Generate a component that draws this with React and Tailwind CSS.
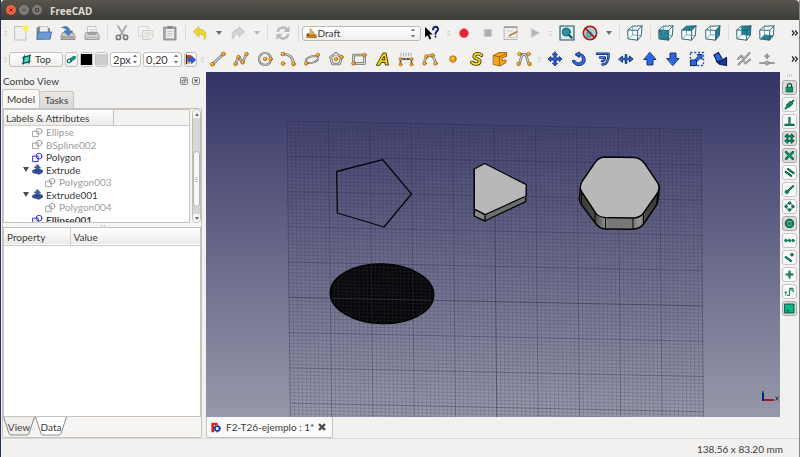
import clsx from 'clsx';

const Icon = ({ children, size = 'size-4' }) => (
    <svg viewBox="0 0 16 16" className={clsx(size, 'shrink-0')} fill="none" strokeLinecap="round" strokeLinejoin="round" aria-hidden="true">
        {children}
    </svg>
);

// Orange control points used by all draft tools
const Dots = ({ at, r = 1.8 }) =>
    at.map(([x, y]) => (
        <g key={`${x}-${y}`}>
            <circle cx={x} cy={y} r={r} fill="#f59a0c" stroke="#9a5a05" strokeWidth="0.6" />
            <circle cx={x - 0.4} cy={y - 0.5} r={r * 0.35} fill="#ffd98a" />
        </g>
    ));

// Grey tube with a dark outline
const Tube = ({ d }) => (
    <>
        <path d={d} stroke="#6a6c68" strokeWidth="2.6" />
        <path d={d} stroke="#d3d5d0" strokeWidth="1.2" />
    </>
);

const Cube = ({ fill }) => (
    <>
        <path d="M1 5 5.500 1H15V10.500L10.500 15H1Z" fill="#f6fbfb" />
        {fill && <path d={fill} fill="#218294" />}
        <path d="M1 5 5.300 1.200 15 .8 14.300 10.600 10.500 15.200 1.300 14ZM1 5 10.700 5.400 15 .8M10.700 5.400 10.500 15.200" stroke="#1c5c6b" strokeWidth="0.9" />
        <path d="M5.300 1.200 5.500 9.800 1.300 14M5.500 9.800 14.300 10.600" stroke="#4c8f9d" strokeWidth="0.7" />
    </>
);

const Blue = ({ d }) => <path d={d} fill="#2b67e0" stroke="#0d2b75" strokeWidth="0.9" />;

const icons = {
    newFile: (
        <>
            <path d="M2 1.5H13V15H2Z" fill="#eeefee" stroke="#b3b5b1" strokeWidth="0.8" />
            <circle cx="12.6" cy="2.8" r="3.2" fill="#f5f07a" />
            <circle cx="12.6" cy="2.8" r="1.6" fill="#fff43a" />
        </>
    ),
    open: (
        <>
            <path d="M1 14V3L2.5 2H6L7 3.5H13.5V13Z" fill="#8b8b88" stroke="#6b6b68" strokeWidth="0.7" />
            <path d="M4 1.5H12V8H4Z" fill="#ededeb" stroke="#a5a5a3" strokeWidth="0.5" />
            <path d="M2.7 7H15.5L14.2 14.2H1.2Z" fill="#6c9bd2" stroke="#416da5" strokeWidth="0.8" />
        </>
    ),
    save: (
        <>
            <path d="M3 7.5H13L15 11V14.5H1V11Z" fill="#c9cac8" stroke="#7c7d7a" strokeWidth="0.8" />
            <path d="M2 11.2H14V13.6H2Z" fill="#a1a29f" />
            <path d="M2 2.5C6 0.5 9.5 2 9.7 6H12.5L8.3 10.7 4 6H6.5C6.5 3.8 5 2.8 2 2.5Z" fill="#4d83be" stroke="#28578f" strokeWidth="0.6" />
        </>
    ),
    print: (
        <>
            <path d="M4 1.5H12V9H4Z" fill="#f7f7f6" stroke="#aaaba8" strokeWidth="0.7" />
            <path d="M6 4.5H10M6 6.3H10" stroke="#bcbcba" strokeWidth="0.8" />
            <path d="M2.5 7.5H13.5L15 10V14.5H1V10Z" fill="#d4d5d2" stroke="#8b8c89" strokeWidth="0.8" />
            <path d="M4 9H12" stroke="#747572" strokeWidth="1.2" />
            <path d="M2 12.5H14" stroke="#a8a9a6" strokeWidth="0.8" />
        </>
    ),
    cut: (
        <>
            <path d="M4 1 9.8 10.6M12 1 6.2 10.6" stroke="#a6a7a4" strokeWidth="1.7" />
            <circle cx="4.4" cy="12.4" r="2.1" stroke="#757674" strokeWidth="1.5" />
            <circle cx="11.6" cy="12.4" r="2.1" stroke="#757674" strokeWidth="1.5" />
        </>
    ),
    copy: (
        <>
            <path d="M1 1.5H10.5V11H1Z" fill="#f2f2f0" stroke="#d0d0ce" strokeWidth="0.8" />
            <path d="M5 5.5H15V12L12.5 14.5H5Z" fill="#eeeeec" stroke="#c4c4c2" strokeWidth="0.8" />
            <path d="M7 8H13M7 10H13M7 12H11" stroke="#d0d0ce" strokeWidth="0.8" />
        </>
    ),
    paste: (
        <>
            <path d="M2 2H14V15H2Z" fill="#a9aaa7" stroke="#848582" strokeWidth="0.8" />
            <path d="M4 4H12V13.3H4Z" fill="#eeeeec" />
            <path d="M5.5 1H10.5V3.8H5.5Z" fill="#8a8b88" />
            <path d="M5.5 6.5H10.5M5.5 8.5H10.5M5.5 10.5H9" stroke="#bdbdbb" strokeWidth="0.8" />
        </>
    ),
    undo: <path d="M1.5 6.5 7 1.5V4.3C12.5 4.2 16 8.5 12.5 14.5 12.5 10.5 10.5 9 7 9V11.7Z" fill="#f0d52e" stroke="#d0b31a" strokeWidth="0.7" />,
    redo: <path d="M14.5 6.5 9 1.5V4.3C3.5 4.2 0 8.5 3.5 14.5 3.5 10.5 5.5 9 9 9V11.7Z" fill="#d2d3d1" stroke="#bbbcba" strokeWidth="0.7" />,
    refresh: (
        <>
            <path d="M2.8 7C3.2 1.8 10 1.5 12 4.5M13.2 9C12.8 14.2 6 14.5 4 11.5" stroke="#b8b9b7" strokeWidth="2.4" strokeLinecap="butt" />
            <path d="M14.5 1V7H8.5ZM1.5 15V9H7.5Z" fill="#b8b9b7" />
        </>
    ),
    help: (
        <>
            <path d="M1 2V12.5L3.5 10.3 5.5 14.5 7.3 13.6 5.4 9.6H8.8Z" fill="#000" />
            <path d="M9 4.5C9 .8 14.5 1 14 4.5 13.7 6.3 11.5 6.5 11.5 9M11.5 11.4V11.8" stroke="#121a72" strokeWidth="1.9" />
        </>
    ),
    record: <circle cx="8" cy="8.2" r="4.6" fill="#e8242f" stroke="#f08a8d" strokeWidth="0.7" />,
    stop: <path d="M4.5 4.5H11.5V11.5H4.5Z" fill="#adaeac" stroke="#c9cac8" />,
    macro: (
        <>
            <path d="M1.5 2H14V14.5H1.5Z" fill="#efefed" stroke="#a8a9a6" strokeWidth="0.8" />
            <path d="M1.5 2.2H14" stroke="#8b8c89" strokeWidth="1.2" />
            <path d="M4 6H10M4 12.5H12" stroke="#c3c3c1" strokeWidth="0.8" />
            <path d="M6.5 10.5 14 6.8" stroke="#b4823d" strokeWidth="1.7" />
        </>
    ),
    play: <path d="M4.5 3.8 12.5 8 4.5 12.2Z" fill="#b4b5b3" stroke="#c8c9c7" strokeWidth="0.6" />,
    fit: (
        <>
            <path d="M1 1H15V15H1Z" fill="#d8eef0" stroke="#1b5866" strokeWidth="1.1" />
            <path d="M9.7 9.7 12.7 12.7" stroke="#14505d" strokeWidth="2.2" />
            <circle cx="7.3" cy="7" r="4" fill="#2c94a3" stroke="#14505d" strokeWidth="0.9" />
        </>
    ),
    drawStyle: (
        <>
            <circle cx="8" cy="8" r="5.2" fill="#8fd5df" />
            <path d="M5 7H9V12H5Z" fill="#5bb6c3" stroke="#2f7d88" strokeWidth="0.6" />
            <circle cx="8" cy="8" r="6.6" stroke="#a91717" strokeWidth="1.7" />
            <path d="M3.4 3.4 12.6 12.6" stroke="#a91717" strokeWidth="1.7" />
        </>
    ),
    iso: <Cube />,
    front: <Cube fill="M1 5 10.700 5.400 10.500 15.200 1.300 14Z" />,
    top: <Cube fill="M1 5 5.300 1.200 15 .8 10.700 5.400Z" />,
    right: <Cube fill="M10.700 5.400 15 .8 14.300 10.600 10.500 15.200Z" />,
    rear: <Cube fill="M5.300 1.200 15 .8 14.300 10.600 5.500 9.800Z" />,
    bottom: <Cube fill="M1.300 14 5.500 9.800 14.300 10.600 10.500 15.200Z" />,
    line: (
        <>
            <Tube d="M2.5 13.2 13.3 3" />
            <Dots at={[[2.5, 13.2], [13.3, 3]]} r={2} />
        </>
    ),
    wire: (
        <>
            <Tube d="M2.5 13 5.5 6 9.5 11.5 13.5 3" />
            <Dots at={[[2.5, 13], [5.5, 6], [9.7, 11.5], [13.5, 3]]} />
        </>
    ),
    circle: (
        <>
            <circle cx="8" cy="8" r="6" stroke="#6a6c68" strokeWidth="2.2" />
            <circle cx="8" cy="8" r="6" stroke="#d3d5d0" strokeWidth="1" />
            <Dots at={[[8, 8], [13.7, 8]]} />
        </>
    ),
    arc: (
        <>
            <Tube d="M3 3C8.5 2.5 13.5 7 13.5 13" />
            <Dots at={[[3, 3], [3, 12.5], [13.5, 13]]} r={1.9} />
        </>
    ),
    ellipse: (
        <>
            <ellipse cx="7.8" cy="8.5" rx="6.4" ry="3.2" stroke="#6a6c68" strokeWidth="2" transform="rotate(-14 8 8)" />
            <ellipse cx="7.8" cy="8.5" rx="6.4" ry="3.2" stroke="#d3d5d0" strokeWidth="0.8" transform="rotate(-14 8 8)" />
            <Dots at={[[2.2, 12.5], [13.8, 4]]} />
        </>
    ),
    polygon: (
        <>
            <Tube d="M8 2.2 13.5 6.2 11.5 13H4.5L2.5 6.2Z" />
            <Dots at={[[8, 8], [13.5, 6]]} />
        </>
    ),
    rectangle: (
        <>
            <Tube d="M2.5 4H13.5V12.5H2.5Z" />
            <Dots at={[[2.5, 12.5], [13.5, 4]]} />
        </>
    ),
    text: <path d="M1.5 14 8 2H11L13.5 14H10.3L10 11.5H6.2L5 14ZM7.5 9H9.8L9.3 5.5Z" fill="#f2d416" stroke="#393500" strokeWidth="0.9" />,
    dimension: (
        <>
            <path d="M2.5 13V8H13.5V13" stroke="#565855" strokeWidth="1.6" />
            <path d="M4.500 8 7 6.500V9.500ZM11.500 8 9 6.500V9.500Z" fill="#565855" />
            <path d="M3 2V5M5.500 2V5M8 2V5M10.500 2V5M13 2V5" stroke="#a6a7a4" strokeWidth="0.9" />
            <Dots at={[[2.5, 8], [2.5, 13.5], [13.5, 8], [13.5, 13.5]]} r={1.5} />
        </>
    ),
    bspline: (
        <>
            <Tube d="M2.5 12.5C3 2 12.5 2 13.5 12.5" />
            <Dots at={[[2.5, 12.5], [4.3, 5.5], [10.5, 4.3], [13.5, 12.5]]} />
        </>
    ),
    point: <Dots at={[[8, 8]]} r={3.3} />,
    shapeString: (
        <>
            <path d="M12.5 4.3C9.5 1.5 4.5 3 5.3 6 6 8.2 11 7.8 10.7 10.5 10.3 13.7 5 13.8 2.8 11.3" stroke="#393500" strokeWidth="3.6" />
            <path d="M12.5 4.3C9.5 1.5 4.5 3 5.3 6 6 8.2 11 7.8 10.7 10.5 10.3 13.7 5 13.8 2.8 11.3" stroke="#f2d416" strokeWidth="2" />
        </>
    ),
    facebinder: (
        <>
            <path d="M1.5 4.500 7 1.500 14.5 1.5V5.5L10 7V9.5L14 9V11.5L8 15 1.5 13.500Z" fill="#f6a417" stroke="#8b5608" strokeWidth="0.8" />
            <path d="M7.5 6 14.5 2.5M7.5 6V14.500M1.5 4.500 7.5 6" stroke="#8b5608" strokeWidth="0.8" />
        </>
    ),
    bezier: (
        <>
            <path d="M4 3H12" stroke="#6a6c68" strokeWidth="1" />
            <Tube d="M2.5 13C5.500 11 4 3.500 8 3.500S10.500 11 13.5 13" />
            <Dots at={[[2.5, 13], [3.500, 3], [12.500, 3], [13.5, 13]]} />
        </>
    ),
    move: <Blue d="M8 1 10.5 3.8H9V7H12.2V5.5L15 8 12.2 10.5V9H9V12.2H10.5L8 15 5.5 12.2H7V9H3.8V10.5L1 8 3.8 5.5V7H7V3.8H5.5Z" />,
    rotate: <Blue d="M8.300 4.500V6.500L4 3.500 8.300 .8V2.500C16 3 16.500 14.500 8 14.600 4.500 14.600 2 12.500 1.300 9.800L3.800 9.200C5 12 8 12.300 9.800 11 12.500 9 11.500 4.700 8.300 4.500Z" />,
    offset: (
        <>
            <path d="M2 2.8H13.5C14 8.5 12 13.3 7.5 13.5M5 6.5H9.8C10 8.5 9 10 7 10.2" stroke="#0d2b75" strokeWidth="2.5" />
            <path d="M2 2.8H13.5C14 8.5 12 13.3 7.5 13.5M5 6.5H9.8C10 8.5 9 10 7 10.2" stroke="#3f78e6" strokeWidth="1.1" />
        </>
    ),
    trimex: <Blue d="M.8 8 4.500 5V7.200H7.200V3.500H8.800V7.200H11.500V5L15.200 8 11.500 11V8.800H8.800V12.500H7.200V8.800H4.500V11Z" />,
    upgrade: <Blue d="M8 1.5 14 8.5H11V14H5V8.5H2Z" />,
    downgrade: <Blue d="M8 14.5 14 7.5H11V2H5V7.5H2Z" />,
    scale: (
        <>
            <path d="M1.5 1.5H14.5V14.5H1.5Z" stroke="#1c4fd0" strokeWidth="1.3" strokeDasharray="2 1.8" strokeLinecap="butt" />
            <path d="M2 9H7.5V14.5H2Z" fill="#2b67e0" stroke="#0d2b75" />
            <Blue d="M6.5 8 9.5 5 8 3.5H13V8.5L11.5 7 8.5 10Z" />
        </>
    ),
    drawing: (
        <>
            <path d="M2 4 6.500 1.500 11 9.500 5 10.500Z" fill="#2b67e0" stroke="#0b1f5c" strokeWidth="1.2" />
            <path d="M4.500 10.500H9L14.500 6.500V14.500L8 13.500Z" fill="#15379c" stroke="#0b1f5c" strokeWidth="1.2" />
        </>
    ),
    wireToBspline: (
        <>
            <path d="M2 8 5.500 4.500 8 8 13.500 2M2.500 13.500 7 9 9.500 12.500 14 8.500" stroke="#858683" strokeWidth="2" />
            <path d="M2 8 5.500 4.500 8 8 13.500 2M2.500 13.500 7 9 9.500 12.500 14 8.500" stroke="#c6c7c5" strokeWidth="0.7" />
        </>
    ),
    addPoint: (
        <>
            <path d="M1 12H15" stroke="#9c9d9a" strokeWidth="2" />
            <circle cx="8" cy="12" r="2.2" fill="#a9aaa7" stroke="#858683" strokeWidth="0.6" />
            <path d="M8 2.5V8M5.3 5.2H10.7" stroke="#959693" strokeWidth="1.9" strokeLinecap="butt" />
        </>
    ),
    plane: (
        <>
            <path d="M4 4 13 2.5 12 12 3 13.5Z" fill="#5fd0bd" stroke="#0b5a55" strokeWidth="1.6" />
            <path d="M1.500 6 14.5 1.500M1.5 14 14 10.500M5 1.5 3.5 15M12.5 1 11.5 14.5" stroke="#0b5a55" strokeWidth="1.2" />
        </>
    ),
    construction: (
        <>
            <path d="M2 11C1 7 7 6 8.5 8.5 9 12 3 14 2 11Z" stroke="#0c7668" strokeWidth="1.8" />
            <path d="M6.5 9C6 5 12 2 14 4 14.5 8 9 10 6.5 9Z" fill="#12a08a" stroke="#0b5a50" />
        </>
    ),
    apply: (
        <>
            <path d="M2 1V14" stroke="#1f1f1f" strokeWidth="1.600" />
            <path d="M3 1.500H9V6H3Z" fill="#d83a2a" />
            <path d="M4 6H9.500V3L15.500 8.5 9.500 14V11H4Z" fill="#2b5bd0" stroke="#0d2b75" strokeWidth="0.8" />
            <path d="M3 11.500H7.500V14.500H3Z" fill="#e8b21c" />
        </>
    ),
    draft: (
        <>
            <path d="M6.5 1 13.5 10.5 6.5 11Z" fill="#f0b41a" stroke="#8b5608" strokeWidth="0.7" />
            <path d="M1 8 5 7.5V13H1Z" fill="#8a4a16" />
            <path d="M2 10.5 15 10V14H2Z" fill="#c9821d" stroke="#71430c" strokeWidth="0.7" />
        </>
    ),
    sketch: (
        <>
            <path d="M1.5 6H9V14H1.5Z" stroke="currentColor" strokeWidth="1.4" />
            <circle cx="10.3" cy="6" r="4.2" stroke="currentColor" strokeWidth="1.4" />
        </>
    ),
    extrude: (
        <>
            <path d="M1 9.5 5 7.5H12L15.5 9.5V12L10 15 1 12.5Z" fill="#2f4f9e" stroke="#16295f" strokeWidth="0.8" />
            <path d="M8 .8 12.3 5.3H10V9.5H6V5.3H3.7Z" fill="#3a66c4" stroke="#16295f" strokeWidth="0.8" />
        </>
    ),
    freecad: (
        <>
            <path d="M2 1H11V4.5H6V7H9V10H6V15H2Z" fill="#d9261c" />
            <circle cx="10.5" cy="9.5" r="3.5" stroke="#17409a" strokeWidth="2.6" fill="#fff" />
            <circle cx="10.5" cy="9.5" r="5" stroke="#17409a" strokeWidth="1.4" strokeDasharray="1.8 2.1" strokeLinecap="butt" />
        </>
    ),
};

const G = '#08966f';
const D = '#044f3d';
const Snap = ({ d, w = 2.2 }) => (
    <>
        <path d={d} stroke={D} strokeWidth={w + 1.5} />
        <path d={d} stroke={G} strokeWidth={w} />
    </>
);
const SnapDots = ({ at, r = 1.6 }) => at.map(([x, y]) => <circle key={`${x}-${y}`} cx={x} cy={y} r={r} fill={G} stroke={D} strokeWidth="0.9" />);

const snaps = [
    {
        label: 'Toggle snap',
        on: true,
        icon: (
            <>
                <path d="M5 8V5C5 1.5 11 1.5 11 5V8" stroke={D} strokeWidth="1.8" />
                <path d="M3.5 7.5H12.5V14.5H3.5Z" fill={G} stroke={D} strokeWidth="1.1" />
            </>
        ),
    },
    { label: 'Midpoint', icon: <><Snap d="M2 14 14 2" w={1} /><SnapDots at={[[6.500, 9.500], [9.500, 6.500]]} r={3} /></> },
    { label: 'Perpendicular', icon: <Snap d="M8 2.5V13M2 13H14" w={1.6} /> },
    { label: 'Grid', on: true, icon: <><Snap d="M5 2V14M11 2V14M2 5H14M2 11H14" w={1} /><SnapDots at={[[4.5, 4.5], [11.5, 4.5], [4.5, 11.5], [11.5, 11.5]]} r={2.2} /></> },
    { label: 'Intersection', on: true, icon: <Snap d="M3 3 13 13M13 3 3 13" w={2} /> },
    { label: 'Parallel', icon: <Snap d="M2.5 7 10.5 13M6 3 14 9" w={1.5} /> },
    { label: 'Endpoint', icon: <><Snap d="M4 11.5 13.5 3" w={1.4} /><SnapDots at={[[4, 11.5]]} r={2.6} /></> },
    { label: 'Angle', icon: <><circle cx="8" cy="8" r="4.7" stroke={D} strokeWidth="1" /><SnapDots at={[[8, 3], [13, 8], [8, 13], [3, 8]]} r={2} /></> },
    { label: 'Center', on: true, icon: <><circle cx="8" cy="8" r="5.2" stroke={D} strokeWidth="3.4" /><circle cx="8" cy="8" r="5.2" stroke={G} strokeWidth="1.6" /><SnapDots at={[[8, 8]]} r={2.1} /></> },
    { label: 'Extension', icon: <SnapDots at={[[2.8, 8], [8, 8], [13.2, 8]]} r={1.9} /> },
    { label: 'Near', icon: <><Snap d="M2.5 7.5 10 13" w={1.8} /><SnapDots at={[[11.5, 4]]} r={2.1} /></> },
    { label: 'Ortho', icon: <Snap d="M8 3.5V12.5M3.5 8H12.5" w={1.5} /> },
    {
        label: 'Dimensions',
        icon: <path d="M8 12V5.5H13.5V9M8 13.5H5M2.5 8V13M1.5 9.5H4M8 3.5H13" stroke="#2b8a74" strokeWidth="1.8" strokeDasharray="3 1" />,
    },
    {
        label: 'Working plane',
        on: true,
        icon: (
            <>
                <path d="M1.5 1.5H14.5V14.5H1.5Z" fill="#0bb987" stroke={D} strokeWidth="1.4" />
                <circle cx="5.5" cy="11" r="1.5" stroke={D} strokeWidth="0.9" />
            </>
        ),
    },
];

const tree = [
    { name: 'Ellipse', icon: 'sketch', hidden: true },
    { name: 'BSpline002', icon: 'sketch', hidden: true },
    { name: 'Polygon', icon: 'sketch' },
    { name: 'Extrude', icon: 'extrude', open: true },
    { name: 'Polygon003', icon: 'sketch', hidden: true, child: true },
    { name: 'Extrude001', icon: 'extrude', open: true },
    { name: 'Polygon004', icon: 'sketch', hidden: true, child: true },
    { name: 'Ellipse001', icon: 'sketch', bold: true },
];

const Tool = ({ name }) => (
    <button type="button" aria-label={name} className="flex h-5 min-w-0 flex-1 items-center justify-center">
        <Icon>{icons[name]}</Icon>
    </button>
);

const Sep = () => <div className="mx-[3px] h-4 w-px shrink-0 bg-[#dddbd9]" />;

const Handle = () => (
    <div className="flex w-2 shrink-0 flex-col items-center gap-px">
        {[0, 1, 2].map((i) => (
            <span key={i} className="h-px w-[3px] bg-[#d6d4d2]" />
        ))}
    </div>
);

const Arrow = ({ off }) => (
    <button type="button" aria-label="More" className="flex w-3.5 shrink-0 items-center justify-center">
        <svg viewBox="0 0 6 4" className="h-1 w-1.5">
            <path d="M0 0H6L3 4Z" fill={off ? '#b9b8b6' : '#6d6c6a'} />
        </svg>
    </button>
);

const More = () => (
    <button type="button" aria-label="More tools" className="flex w-5 shrink-0 items-center justify-end">
        <svg viewBox="0 0 8 6" className="h-1.5 w-2" fill="none" stroke="#222" strokeWidth="1.2">
            <path d="M1 .5 3.2 3 1 5.5M4.2 .5 6.4 3 4.2 5.5" />
        </svg>
    </button>
);

const Stepper = () => (
    <svg viewBox="0 0 6 10" className="h-2.5 w-1.5 shrink-0" fill="#6d6c6a" aria-hidden="true">
        <path d="M1 3 3 .5 5 3ZM1 7 3 9.5 5 7Z" />
    </svg>
);

const Spin = ({ label, value, className }) => (
    <label className={clsx('flex h-[15px] shrink-0 items-center rounded-[3px] border border-[#c2bfbc] bg-white pr-0.5', className)}>
        <input aria-label={label} defaultValue={value} className="h-full w-full min-w-0 bg-transparent pl-0.5 text-[11px] leading-3 outline-none" />
        <Stepper />
    </label>
);

const box = 'flex shrink-0 items-center justify-center rounded-[3px] border border-[#c2bfbc] bg-gradient-to-b from-white to-[#f0efed]';

function TitleBar() {
    return (
        <header className="flex h-5 items-center gap-[3px] rounded-t bg-gradient-to-b from-[#57554e] to-[#3d3c38] pl-[5px] text-[#dfdbd2]">
            <button type="button" aria-label="Close" className="flex size-[10px] items-center justify-center rounded-full bg-[#ee6238]">
                <svg viewBox="0 0 6 6" className="size-1.5" stroke="#5d2411"><path d="M1.5 1.5 4.5 4.5M4.5 1.5 1.5 4.5" /></svg>
            </button>
            <button type="button" aria-label="Minimize" className="flex size-[10px] items-center justify-center rounded-full bg-[#7d7b73]">
                <svg viewBox="0 0 6 6" className="size-1.5" stroke="#3c3b37"><path d="M1 3H5" /></svg>
            </button>
            <button type="button" aria-label="Maximize" className="flex size-[10px] items-center justify-center rounded-full bg-[#7d7b73]">
                <svg viewBox="0 0 6 6" className="size-1.5" fill="none" stroke="#3c3b37"><path d="M1.5 1.5H4.5V4.5H1.5Z" /></svg>
            </button>
            <h1 className="pt-px pl-[5px] font-['Noto_Sans',sans-serif] text-[10px] font-bold">FreeCAD</h1>
        </header>
    );
}

function Toolbars() {
    return (
        <>
            <div className="flex h-[26px] items-center">
                <Handle />
                {['newFile', 'open', 'save', 'print'].map((n) => <Tool key={n} name={n} />)}
                <Sep />
                {['cut', 'copy', 'paste'].map((n) => <Tool key={n} name={n} />)}
                <Sep />
                <Tool name="undo" />
                <Arrow />
                <Tool name="redo" />
                <Arrow off />
                <Sep />
                <Tool name="refresh" />
                <Sep />
                <label className="relative flex h-[15px] w-[119px] shrink-0 items-center rounded-[3px] border border-[#bcb9b6] bg-gradient-to-b from-white to-[#f0efed] pr-1">
                    <span className="pointer-events-none absolute left-[3px]"><Icon size="size-[11px]">{icons.draft}</Icon></span>
                    <select aria-label="Workbench" className="h-full w-full appearance-none bg-transparent pl-[15px] text-[10px] leading-3 outline-none">
                        <option>Draft</option>
                    </select>
                    <Stepper />
                </label>
                <Tool name="help" />
                <Handle />
                {['record', 'stop', 'macro', 'play'].map((n) => <Tool key={n} name={n} />)}
                <Handle />
                <Tool name="fit" />
                <Tool name="drawStyle" />
                <Arrow />
                <Sep />
                <Tool name="iso" />
                <Sep />
                {['front', 'top', 'right'].map((n) => <Tool key={n} name={n} />)}
                <Sep />
                {['rear', 'bottom'].map((n) => <Tool key={n} name={n} />)}
                <More />
            </div>
            <div className="flex h-[26px] items-center">
                <Handle />
                <div className="flex w-[189px] shrink-0 items-center gap-0.5">
                    <button type="button" className={clsx(box, 'h-[15px] w-[54px] gap-[3px]')}>
                        <Icon size="size-[11px]">{icons.plane}</Icon>
                        Top
                    </button>
                    <button type="button" aria-label="Construction mode" className={clsx(box, 'h-[15px] w-[13px]')}><Icon size="size-[11px]">{icons.construction}</Icon></button>
                    <button type="button" aria-label="Line colour" className={clsx(box, 'h-[15px] w-[13px]')}><span className="size-[11px] bg-black" /></button>
                    <button type="button" aria-label="Face colour" className={clsx(box, 'h-[15px] w-[13px]')}><span className="size-[11px] bg-[#cccccc]" /></button>
                    <Spin label="Line width" value="2px" className="w-[31px]" />
                    <Spin label="Text size" value="0,20" className="w-[39px]" />
                    <button type="button" aria-label="Apply style" className={clsx(box, 'h-[15px] w-[13px]')}><Icon size="size-[11px]">{icons.apply}</Icon></button>
                </div>
                <Handle />
                {['line', 'wire', 'circle', 'arc', 'ellipse', 'polygon', 'rectangle', 'text', 'dimension', 'bspline', 'point', 'shapeString', 'facebinder', 'bezier'].map((n) => <Tool key={n} name={n} />)}
                <Handle />
                {['move', 'rotate', 'offset', 'trimex', 'upgrade', 'downgrade', 'scale', 'drawing', 'wireToBspline', 'addPoint'].map((n) => <Tool key={n} name={n} />)}
                <More />
            </div>
        </>
    );
}

function TreeItem({ item }) {
    return (
        <li className={clsx('flex items-center', item.child ? 'pl-8' : 'pl-[19px]', item.hidden && 'text-[#a09e9c]', item.bold && 'font-bold')}>
            <span className="flex w-[9px] shrink-0">
                {item.open && <svg viewBox="0 0 6 5" className="h-[5px] w-1.5"><path d="M0 0H6L3 5Z" fill="#4b4a48" /></svg>}
            </span>
            <span className={clsx('flex w-[14px] shrink-0', item.icon === 'sketch' && !item.hidden && 'text-[#2a2af0]')}>
                <Icon size="size-[11px]">{icons[item.icon]}</Icon>
            </span>
            {item.name}
        </li>
    );
}

function ComboView() {
    return (
        <aside className="flex w-[201px] shrink-0 flex-col pl-px">
            <div className="flex h-[17px] items-center gap-1 pl-px pr-0.5">
                <h2 className="flex-1">Combo View</h2>
                {['M1.5 3H5V6.5H1.5ZM3 1.5H6.5V5', 'M2 2 6 6M6 2 2 6'].map((d, i) => (
                    <button key={d} type="button" aria-label={i ? 'Close panel' : 'Float panel'} className="flex size-2 items-center justify-center rounded-[2px] border border-[#8b8987]">
                        <svg viewBox="0 0 8 8" className="size-full" fill="none" stroke="#4b4a48" strokeWidth={i ? 1.6 : 0.9}><path d={d} /></svg>
                    </button>
                ))}
            </div>
            <div className="flex h-[19px] items-end" role="tablist">
                <button type="button" role="tab" aria-selected="true" className="h-[19px] w-[38px] rounded-t-[3px] border border-b-0 border-[#c5c2bf] bg-[#f9f8f7]">Model</button>
                <button type="button" role="tab" aria-selected="false" className="h-[17px] w-[34px] rounded-t-[3px] border border-b-0 border-l-0 border-[#c5c2bf] bg-gradient-to-b from-[#e9e8e6] to-[#dad8d6]">Tasks</button>
            </div>
            <div className="flex flex-1 flex-col rounded-b-[2px] border border-[#c5c2bf] bg-[#f6f5f4]">
                <div className="flex h-[114px] gap-0.5">
                    <div className="flex min-w-0 flex-1 flex-col overflow-hidden border border-[#c5c2bf] bg-white">
                        <div className="flex h-4 shrink-0 border-b border-[#d0cdca] bg-[#f4f3f2]">
                            <span className="w-[110px] border-r border-[#c5c2bf] bg-gradient-to-b from-white to-[#eceae8] pl-0.5 leading-4">Labels &amp; Attributes</span>
                        </div>
                        <ul className="grid h-[100px] shrink-0 grid-rows-8 leading-3">
                            {tree.map((item) => <TreeItem key={item.name} item={item} />)}
                        </ul>
                    </div>
                    <div className="flex w-[9px] shrink-0 flex-col items-center rounded-full border border-[#bebbb8] bg-[#d9d7d5]">
                        <span className="flex h-2 w-full items-center justify-center rounded-t-full bg-[#f6f5f4]"><svg viewBox="0 0 4 3" className="h-[3px] w-1"><path d="M0 3H4L2 0Z" fill="#6d6c6a" /></svg></span>
                        <span className="mt-[33px] flex h-14 w-full flex-col items-center justify-center gap-px rounded-full border border-[#b5b2af] bg-[#f8f7f6]">
                            {[0, 1, 2].map((i) => <span key={i} className="h-px w-[3px] bg-[#c5c2bf]" />)}
                        </span>
                        <span className="mt-auto flex h-2 w-full items-center justify-center rounded-b-full bg-[#f6f5f4]"><svg viewBox="0 0 4 3" className="h-[3px] w-1"><path d="M0 0H4L2 3Z" fill="#6d6c6a" /></svg></span>
                    </div>
                </div>
                <div className="flex h-1 items-center justify-center gap-px">
                    {[0, 1, 2].map((i) => <span key={i} className="size-px bg-[#b5b2af]" />)}
                </div>
                <div className="flex-1 border border-[#c5c2bf] bg-white">
                    <table className="w-full border-collapse text-left">
                        <thead>
                            <tr className="h-[17px] border-b border-[#d0cdca] bg-gradient-to-b from-white to-[#eceae8]">
                                <th scope="col" className="w-[66px] border-r border-[#d0cdca] pt-px pl-[3px] font-normal">Property</th>
                                <th scope="col" className="pt-px pl-[3px] font-normal">Value</th>
                            </tr>
                        </thead>
                    </table>
                </div>
                <div className="flex h-5" role="tablist">
                    {['View', 'Data'].map((t) => (
                        <button key={t} type="button" role="tab" aria-selected={t === 'Data'} className="relative h-[19px] w-8">
                            <svg viewBox="0 0 32 19" className="absolute inset-0 size-full" stroke="#6d6c6a" strokeWidth="0.8">
                                <path d="M.5 0 6 16.5Q6.500 18 8 18H24Q25.500 18 26 16.500L31.500 0" fill={t === 'Data' ? '#ffffff' : '#f0efed'} />
                            </svg>
                            <span className="relative">{t}</span>
                        </button>
                    ))}
                </div>
            </div>
        </aside>
    );
}

// Draft grid: 10 main squares wide, 10 subdivisions each, seen slightly in perspective
const columns = Array.from({ length: 101 }, (_, i) => i);
const rows = Array.from({ length: 85 }, (_, i) => i);
const lineOpacity = (i) => (i === 50 ? 0.65 : i % 10 === 0 ? 0.45 : 0.2);

const Grid = (props) => (
    <g strokeWidth="0.9" {...props}>
        {columns.map((i) => (
            <line key={i} x1={287 + i * 4.14} y1={121 + i * 0.086} x2={290.4 + i * 4.13} y2={418 + i * 0.086} opacity={lineOpacity(i)} />
        ))}
        {rows.map((i) => (
            <line key={i} x1={287 + i * 0.04} y1={121 + i * 3.527} x2={701 + i * 0.033} y2={129.6 + i * 3.527} opacity={lineOpacity(i)} />
        ))}
    </g>
);

function Viewport() {
    return (
        <svg viewBox="206 72 574 345" preserveAspectRatio="xMidYMid slice" className="h-full w-full" role="img" aria-label="3D view" strokeLinejoin="round">
            <defs>
                <linearGradient id="sky" x1="0" y1="0" x2="0" y2="1">
                    <stop offset="0" stopColor="#333365" />
                    <stop offset="1" stopColor="#9898ab" />
                </linearGradient>
                <linearGradient id="side" x1="0" y1="0" x2="1" y2="0">
                    <stop offset="0" stopColor="#3a3a3a" />
                    <stop offset="0.2" stopColor="#4a4a4a" />
                    <stop offset="0.32" stopColor="#8d8d8d" />
                    <stop offset="0.36" stopColor="#777777" />
                    <stop offset="0.66" stopColor="#777777" />
                    <stop offset="0.76" stopColor="#9a9a9a" />
                    <stop offset="0.82" stopColor="#4a4a4a" />
                    <stop offset="1" stopColor="#333333" />
                </linearGradient>
                <clipPath id="ellipse">
                    <ellipse cx="382" cy="293.800" rx="51" ry="29" transform="rotate(1.500 382 294)" />
                </clipPath>
            </defs>
            <path d="M206 72H780V417H206Z" fill="url(#sky)" />
            <Grid stroke="#2a2a44" />
            <path d="M336.700 171.500 382.700 159.700 411.500 194 384 227 337.300 213Z" fill="none" stroke="#050508" strokeWidth="1.3" />
            <g stroke="#050505" strokeWidth="1.3">
                <path d="M474.300 169V216L484.700 221 525.700 201.700 526 185Z" fill="#6e6e6e" />
                <path d="M474.300 209 485 214.700V221L474.300 216Z" fill="#868686" />
                <path d="M474.300 169 484.700 163.500 526.300 184.700 526 196 485.300 214.700 474.300 209Z" fill="#b8b8b8" />
            </g>
            <g stroke="#050505" strokeWidth="1.4">
                <path d="M580.500 187 579.300 198Q579 201 581 204L594.500 222Q599 229 606 229L632 229.300Q640 229 644 223.500L656.500 205Q658 203 658.500 196L659.500 187Z" fill="url(#side)" />
                <path d="M581.500 191V203M595 212V222M605.500 217V229M633 218V229M643.500 213V223.500M657.500 193 656.700 205" fill="none" strokeWidth="1" />
                <path d="M605 157 634 157.500Q641 158 645 164L657.500 182.500Q660.500 187 657.500 193L643.500 213Q640 218 632 218L605 217.500Q598 217 595 212L581.500 191.500Q579 187 582 181.500L594 164Q598 157 605 157Z" fill="#b8b8b8" />
            </g>
            <ellipse cx="382" cy="293.800" rx="52" ry="30" fill="#0a0a0c" stroke="#000" transform="rotate(1.500 382 294)" />
            <Grid stroke="#44445c" clipPath="url(#ellipse)" />
            <g strokeWidth="2" fill="none">
                <path d="M763 400H774" stroke="#a01c1c" />
                <path d="M763 401V392" stroke="#14149a" />
                <path d="M763 393V391" stroke="#167a16" />
                <path d="M775.500 396.500 778.500 400.500M778.500 396.500 775.500 400.500" stroke="#222" strokeWidth="0.9" />
            </g>
        </svg>
    );
}

export default function App() {
    return (
        <div className="min-h-screen bg-[#23355f] pl-px font-[Lato,'Noto_Sans',sans-serif] text-[10px] leading-3 text-[#3c3b3a]">
            <div className="flex min-h-screen flex-col border-r border-[#8a8886] bg-[#f2f1f0]">
                <TitleBar />
                <Toolbars />
                <div className="flex min-h-0 flex-1">
                    <ComboView />
                    <main className="ml-1 flex min-w-0 flex-1 flex-col">
                        <div className="flex flex-1">
                            <div className="flex-1 basis-0">
                                <Viewport />
                            </div>
                        </div>
                        <div className="flex h-[21px]">
                            <div className="flex w-[127px] items-center rounded-b-[2px] border border-t-0 border-[#c5c2bf] bg-[#fbfafa] pl-[3px]">
                                <Icon size="size-[11px]">{icons.freecad}</Icon>
                                <span className="flex-1 pl-[5px] whitespace-nowrap">F2-T26-ejemplo : 1*</span>
                                <button type="button" aria-label="Close document" className="mr-1.5">
                                    <svg viewBox="0 0 8 8" className="size-2" stroke="#4b4a48" strokeWidth="2.4"><path d="M1 1 7 7M7 1 1 7" /></svg>
                                </button>
                            </div>
                        </div>
                    </main>
                    <nav aria-label="Snap tools" className="flex w-[19px] shrink-0 flex-col items-center gap-0.5 pt-0.5">
                        <div className="mb-px flex h-[3px] items-center gap-px">
                            {[0, 1, 2].map((i) => <span key={i} className="h-[3px] w-px bg-[#cfcdcb]" />)}
                        </div>
                        {snaps.map((s) => (
                            <button key={s.label} type="button" aria-label={s.label} aria-pressed={!!s.on} className={clsx('flex size-[15px] shrink-0 items-center justify-center rounded-[3px] border', s.on ? 'border-[#aba8a5] bg-[#dddbd9]' : 'border-[#c8c5c2] bg-[#fbfafa]')}>
                                <Icon size="size-[11px]">{s.icon}</Icon>
                            </button>
                        ))}
                    </nav>
                </div>
                <footer className="flex h-[19px] items-center justify-end border-t border-[#dcdad8] pr-4 pt-0.5">138.56 x 83.20 mm</footer>
            </div>
        </div>
    );
}
